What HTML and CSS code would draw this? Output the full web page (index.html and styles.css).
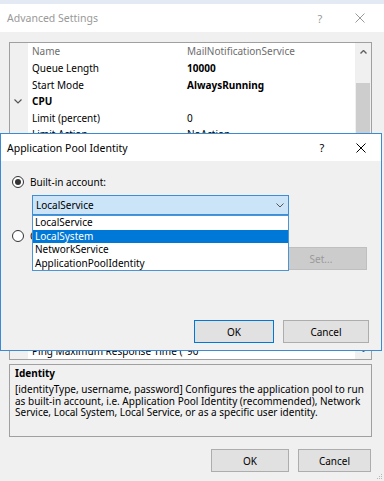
FILE: index.html
```html
<!DOCTYPE html>
<html lang="en">
<head>
  <meta charset="UTF-8"/>
  <meta name="viewport" content="width=device-width, initial-scale=1.0"/>
  <title>Advanced Settings</title>
  <link rel="stylesheet" href="styles.css">
</head>
<body>
  <!-- Background window: IIS application pool advanced settings -->
  <div class="window">
    <div class="titlebar inactive">
      <span class="title">Advanced Settings</span>
      <span class="help">?</span>
      <svg class="close" viewBox="0 0 10 10"><path d="M0.5 0.5L9.5 9.5M9.5 0.5L0.5 9.5"/></svg>
    </div>
    <div class="content">
      <div class="grid">
        <div class="rows">
          <div class="row readonly"><span class="gutter"></span><span class="name">Name</span><span class="value">MailNotificationService</span></div>
          <div class="row"><span class="gutter"></span><span class="name">Queue Length</span><span class="value changed">10000</span></div>
          <div class="row"><span class="gutter"></span><span class="name">Start Mode</span><span class="value changed">AlwaysRunning</span></div>
          <div class="row category"><span class="gutter"><svg class="chev" viewBox="0 0 8 5"><path d="M0.5 0.5L4 4L7.5 0.5"/></svg></span><span class="name">CPU</span></div>
          <div class="row"><span class="gutter"></span><span class="name">Limit (percent)</span><span class="value">0</span></div>
          <div class="row"><span class="gutter"></span><span class="name">Limit Action</span><span class="value">NoAction</span></div>
          <div class="row"><span class="gutter"></span><span class="name">Limit Interval (minutes)</span><span class="value">5</span></div>
          <div class="row"><span class="gutter"></span><span class="name">Processor Affinity Enabled</span><span class="value">False</span></div>
          <div class="row"><span class="gutter"></span><span class="name">Processor Affinity Mask</span><span class="value">4294967295</span></div>
          <div class="row"><span class="gutter"></span><span class="name">Processor Affinity Mask (64-bit option)</span><span class="value">4294967295</span></div>
          <div class="row category"><span class="gutter"><svg class="chev" viewBox="0 0 8 5"><path d="M0.5 0.5L4 4L7.5 0.5"/></svg></span><span class="name">Process Model</span></div>
          <div class="row"><span class="gutter"></span><span class="name">Generate Process Model Event Log Entry</span><span class="value"></span></div>
          <div class="row selected"><span class="gutter"></span><span class="name">Identity</span><span class="value">LocalService</span></div>
          <div class="row"><span class="gutter"></span><span class="name">Idle Time-out (minutes)</span><span class="value">20</span></div>
          <div class="row"><span class="gutter"></span><span class="name">Idle Time-out Action</span><span class="value">Terminate</span></div>
          <div class="row"><span class="gutter"></span><span class="name">Load User Profile</span><span class="value">True</span></div>
          <div class="row"><span class="gutter"></span><span class="name">Maximum Worker Processes</span><span class="value">1</span></div>
          <div class="row"><span class="gutter"></span><span class="name">Ping Enabled</span><span class="value">True</span></div>
          <div class="row"><span class="gutter"></span><span class="name">Ping Maximum Response Time (seconds)</span><span class="value">90</span></div>
        </div>
        <div class="scrollbar">
          <svg class="arrow" viewBox="0 0 7 4"><path d="M0.5 3.5L3.5 0.5L6.5 3.5"/></svg>
          <div class="track"><div class="thumb"></div></div>
          <svg class="arrow" viewBox="0 0 7 4"><path d="M0.5 0.5L3.5 3.5L6.5 0.5"/></svg>
        </div>
      </div>
      <div class="desc">
        <div class="desc-title">Identity</div>
        <p>[identityType, username, password] Configures the application pool to run as built-in account, i.e. Application Pool Identity (recommended), Network Service, Local System, Local Service, or as a specific user identity.</p>
      </div>
      <div class="actions">
        <button class="btn btn-ok">OK</button>
        <button class="btn btn-cancel">Cancel</button>
      </div>
    </div>
    <svg class="grip" viewBox="0 0 6 6"><path d="M5 1h1v1H5zM3 3h1v1H3zM5 3h1v1H5zM1 5h1v1H1zM3 5h1v1H3zM5 5h1v1H5z"/></svg>
  </div>

  <!-- Modal dialog on top -->
  <div class="dialog">
    <div class="titlebar">
      <span class="title">Application Pool Identity</span>
      <span class="help">?</span>
      <svg class="close" viewBox="0 0 10 10"><path d="M0.5 0.5L9.5 9.5M9.5 0.5L0.5 9.5"/></svg>
    </div>
    <div class="dlg-body">
      <label class="radio-row"><span class="radio checked"></span>Built-in account:</label>
      <div class="combo-wrap">
        <div class="combo">
          <span>LocalService</span>
          <svg class="combo-chev" viewBox="0 0 8 5"><path d="M0.5 0.5L4 4L7.5 0.5"/></svg>
        </div>
        <ul class="dropdown">
          <li>LocalService</li>
          <li class="active">LocalSystem</li>
          <li>NetworkService</li>
          <li>ApplicationPoolIdentity</li>
        </ul>
      </div>
      <label class="radio-row second"><span class="radio"></span>Custom account:</label>
      <div class="custom-row">
        <div class="textbox"></div>
        <button class="btn btn-set" disabled>Set...</button>
      </div>
      <div class="dlg-actions">
        <button class="btn btn-ok default">OK</button>
        <button class="btn btn-dcancel">Cancel</button>
      </div>
    </div>
  </div>
</body>
</html>
```

FILE: styles.css
```css
:root {
  --face: #f0f0f0;
  --btn: #e1e1e1;
  --btn-border: #adadad;
  --accent: #0078d7;
  --frame: #3a8ad4;
  --font-stack: "Noto Sans", "Open Sans", sans-serif;
}
*, *::before, *::after { box-sizing: border-box; }
body {
  margin: 0;
  width: 384px; height: 481px;
  overflow: hidden;
  position: relative;
  background: var(--face);
  font-family: var(--font-stack);
  font-size: 10px;
  color: #000;
}
.window {
  height: 100%;
  border-top: 4px solid #e3eaf3;
}

/* Title bars */
.titlebar {
  height: 28px;
  background: #fff;
  display: flex; align-items: center;
  padding-left: 7px;
}
.titlebar .title { flex: 1; font-size: 10.5px; }
.titlebar .help { width: 8px; text-align: center; margin-right: 31px; font-size: 11px; }
.titlebar .close { width: 10px; height: 10px; margin-right: 19px; stroke: #000; stroke-width: 1; fill: none; }
.titlebar.inactive .title, .titlebar.inactive .help { color: #999; }
.titlebar.inactive .close { stroke: #999; }

/* Property grid */
.content { padding: 10px 12px 0 9px; }
.grid {
  display: flex;
  height: 318px;
  border: 1px solid #a0a0a0;
  background: #fff;
}
.rows { flex: 1; overflow: hidden; }
.row {
  display: flex; align-items: center;
  height: 16.63px;
  white-space: nowrap;
}
.gutter {
  width: 18px; height: 100%;
  background: var(--face);
  display: flex; align-items: center; justify-content: flex-start;
  padding-left: 4px;
}
.name { width: 155px; padding-left: 4px; overflow: hidden; }
.value { padding-left: 4px; }
.value.changed { font-weight: bold; }
.readonly .name, .readonly .value { color: #6d6d6d; }
.category .name { font-weight: bold; }
.chev { width: 8px; height: 5px; stroke: #555; stroke-width: 1.2; fill: none; }

.scrollbar {
  width: 16px;
  background: var(--face);
  display: flex; flex-direction: column; align-items: center;
}
.scrollbar .arrow { width: 7px; height: 4px; margin: 7px 0; stroke: #606060; stroke-width: 1.4; fill: none; }
.scrollbar .track { flex: 1; width: 100%; padding: 22px 1px 0; }
.thumb { height: 120px; background: #cdcdcd; }

/* Description box */
.desc {
  margin-top: 4px;
  height: 73px;
  border: 1px solid #a0a0a0;
  padding: 3px 5px;
  line-height: 11.8px;
}
.desc-title { font-weight: bold; margin-bottom: 4px; }
.desc p { margin: 0; }

.actions {
  display: flex; justify-content: flex-end; gap: 9px;
  margin-top: 12px; padding-right: 1px;
}
.btn {
  height: 23px;
  font: inherit;
  color: #000;
  background: var(--btn);
  border: 1px solid var(--btn-border);
  padding: 0;
}
.actions .btn-ok { width: 78px; }
.actions .btn-cancel { width: 73px; }
.grip {
  position: absolute; right: 2px; bottom: 2px;
  width: 6px; height: 6px; fill: #b8b8b8;
}

/* Dialog */
.dialog {
  position: absolute; left: 0; top: 133px;
  width: 382px; height: 218px;
  border: 1px solid var(--frame);
  background: var(--face);
  display: flex; flex-direction: column;
}
.dialog .titlebar { height: 27px; padding-left: 6px; }
.dialog .titlebar .help { margin-right: 30px; }
.dialog .titlebar .close { margin-right: 15px; }
.dlg-body {
  flex: 1;
  padding: 15px 12px 0 11px;
  display: flex; flex-direction: column;
}
.radio-row {
  display: flex; align-items: center; gap: 6px;
  height: 12px;
}
.radio-row.second { margin-top: 15px; }
.radio {
  width: 12px; height: 12px;
  border: 1px solid #333;
  border-radius: 50%;
  background: #fff;
  display: flex; align-items: center; justify-content: center;
}
.radio.checked::after {
  content: ""; width: 6px; height: 6px; border-radius: 50%; background: #333;
}
.combo-wrap { position: relative; margin: 7px 0 0 20px; width: 257px; }
.combo {
  height: 20px;
  display: flex; align-items: center; justify-content: space-between;
  padding: 0 4px 0 3px;
  background: #cce4f7;
  border: 1px solid #3d8ed6;
}
.combo-chev { width: 8px; height: 5px; stroke: #555; stroke-width: 1; fill: none; }
.dropdown {
  position: absolute; left: 0; top: 100%;
  width: 100%;
  margin: 0; padding: 0;
  list-style: none;
  background: #fff;
  border: 1px solid #4a94d8;
  z-index: 2;
}
.dropdown li { height: 13.5px; line-height: 13.5px; padding-left: 2px; }
.dropdown li.active { background: var(--accent); color: #fff; }

.custom-row {
  display: flex; gap: 5px;
  margin: 5px 0 0 20px;
}
.textbox { width: 238px; height: 23px; background: #fff; border: 1px solid #7a7a7a; }
.btn-set {
  width: 92px;
  background: #cccccc; border-color: #bfbfbf; color: #9a9a9a;
}
.dlg-actions {
  display: flex; justify-content: flex-end; gap: 9px;
  margin-top: 50px;
}
.dlg-actions .btn-ok { width: 80px; }
.dlg-actions .btn-dcancel { width: 86px; }
.btn.default { border-color: var(--accent); }
```
